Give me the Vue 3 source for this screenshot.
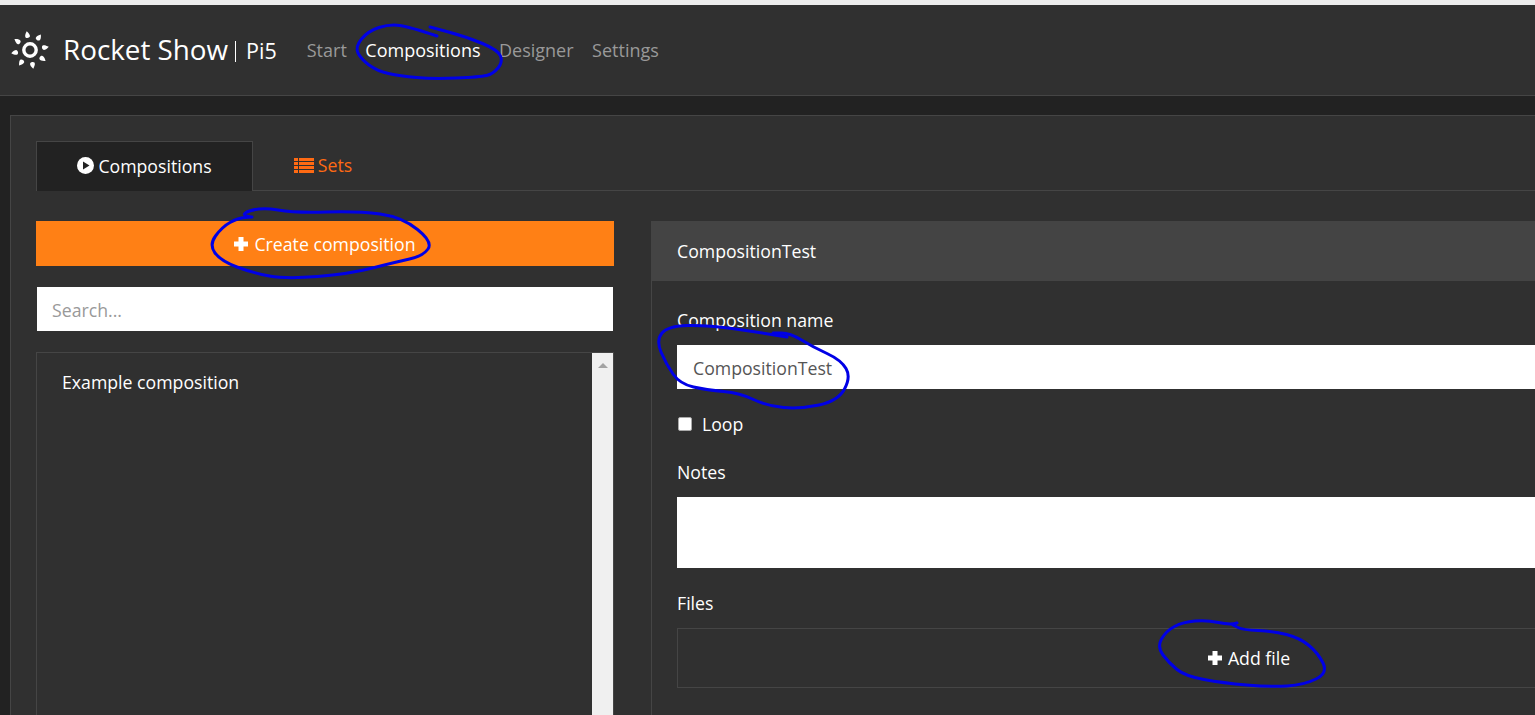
<script setup>
const navLinks = [
  { label: 'Start' },
  { label: 'Compositions', active: true },
  { label: 'Designer' },
  { label: 'Settings' }
]

const rays = [-10, 35, 80, 125, 170, 215, 260, 305]

// pen scribbles on top of the screenshot, smoothed through midpoints
const scribbles = [
  [[437,36],[410,27],[390,24],[368,31],[355,47],[361,59],[377,71],[400,76],[433,79],[480,77],[493,74],[503,62],[498,50],[467,37],[430,27]],
  [[252,217],[238,215],[261,207],[295,213],[358,211],[402,217],[433,242],[423,256],[396,262],[349,274],[286,279],[253,273],[221,261],[209,245],[222,227],[238,218],[252,217]],
  [[787,337],[757,332],[707,325],[668,326],[656,340],[666,364],[680,384],[707,390],[740,393],[767,406],[800,409],[838,401],[851,377],[841,360],[813,347],[790,333],[773,333]],
  [[1237,623],[1230,625],[1207,620],[1183,622],[1166,631],[1157,647],[1169,663],[1185,676],[1223,683],[1270,687],[1304,685],[1328,673],[1318,653],[1300,638],[1273,631],[1243,630],[1233,625]]
]

function smooth(pts) {
  let d = `M${pts[0][0]} ${pts[0][1]}`
  for (let i = 1; i < pts.length - 1; i++) {
    const mx = (pts[i][0] + pts[i + 1][0]) / 2
    const my = (pts[i][1] + pts[i + 1][1]) / 2
    d += ` Q${pts[i][0]} ${pts[i][1]} ${mx} ${my}`
  }
  const last = pts[pts.length - 1]
  return d + ` L${last[0]} ${last[1]}`
}
</script>

<template>
  <div class="page">
    <header class="navbar">
      <svg class="logo" viewBox="0 0 40 40" width="40" height="40">
        <circle cx="20" cy="20" r="6.2" fill="none" stroke="#fff" stroke-width="3.4" />
        <path
          v-for="r in rays"
          :key="r"
          d="M20 1 C22 3.5 22.8 5.5 22.2 6.8 C21.4 8.2 18.6 8.2 17.8 6.8 C17.2 5.5 18 3.5 20 1Z"
          fill="#fff"
          :transform="`rotate(${r} 20 20)`"
        />
      </svg>
      <span class="brand">Rocket Show</span>
      <span class="brand-sep"></span>
      <span class="device">Pi5</span>
      <nav class="nav">
        <a v-for="l in navLinks" :key="l.label" :class="{ active: l.active }">{{ l.label }}</a>
      </nav>
    </header>

    <main class="main">
      <section class="panel">
        <div class="tabs">
          <div class="tab active">
            <svg width="17" height="17" viewBox="0 0 17 17">
              <circle cx="8.5" cy="8.5" r="8.5" fill="#fff" />
              <path d="M6 4.5 L12.5 8.5 L6 12.5Z" fill="#222" />
            </svg>
            Compositions
          </div>
          <div class="tab">
            <svg width="20" height="15" viewBox="0 0 20 15" fill="#ff6a13">
              <path d="M0 0h4v3H0zM5 0h15v3H5zM0 4h4v3H0zM5 4h15v3H5zM0 8h4v3H0zM5 8h15v3H5zM0 12h4v3H0zM5 12h15v3H5z" />
            </svg>
            Sets
          </div>
        </div>

        <div class="columns">
          <div class="left">
            <button class="btn-create">
              <svg class="plus" width="14" height="14" viewBox="0 0 14 14"><path d="M4.5 0h5v4.5H14v5H9.5V14h-5V9.5H0v-5h4.5z" fill="#fff" /></svg>
              Create composition
            </button>
            <input class="search" type="text" placeholder="Search..." />
            <div class="list">
              <div class="list-items">
                <div class="list-item">Example composition</div>
              </div>
              <div class="scrollbar"><span class="arrow"></span></div>
            </div>
          </div>

          <div class="detail">
            <div class="detail-head">CompositionTest</div>
            <div class="detail-body">
              <label class="lbl">Composition name</label>
              <input class="field" type="text" value="CompositionTest" />
              <label class="loop"><span class="check"></span>Loop</label>
              <label class="lbl notes-lbl">Notes</label>
              <div class="notes"></div>
              <label class="lbl files-lbl">Files</label>
              <div class="files">
                <svg class="plus" width="14" height="14" viewBox="0 0 14 14"><path d="M4.5 0h5v4.5H14v5H9.5V14h-5V9.5H0v-5h4.5z" fill="#fff" /></svg>
                Add file
              </div>
            </div>
          </div>
        </div>
      </section>
    </main>

    <svg class="ink" width="1535" height="715" viewBox="0 0 1535 715">
      <path v-for="(s, i) in scribbles" :key="i" :d="smooth(s)" />
    </svg>
  </div>
</template>

<style>
html, body { margin: 0; background: #222; }
</style>

<style scoped>
.page {
  position: relative;
  width: 1535px;
  height: 715px;
  overflow: hidden;
  background: #222;
  color: #fff;
  font-family: "Open Sans", "Noto Sans", sans-serif;
  font-size: 17.7px;
  border-top: 5px solid #ececec;
  box-sizing: border-box;
}

.navbar {
  height: 91px;
  box-sizing: border-box;
  background: #303030;
  border-bottom: 1px solid #454545;
  display: flex;
  align-items: center;
  padding-left: 10px;
}
.logo { margin-right: 13px; }
.brand { font-size: 27.8px; padding-bottom: 2px; }
.brand-sep { width: 1px; height: 21px; background: #fff; margin: 3px 10px 0 7px; }
.device { font-size: 21.5px; margin-right: 30px; }
.nav { display: flex; gap: 18.5px; font-size: 18px; }
.nav a { color: #999; }
.nav a.active { color: #fff; }

.main { padding: 19px 0 0 10px; }
.panel {
  width: 1900px;
  height: 700px;
  box-sizing: border-box;
  background: #303030;
  border: 1px solid #454545;
  padding: 25px;
}

.tabs {
  display: flex;
  height: 50px;
  box-sizing: border-box;
  border-bottom: 1px solid #454545;
}
.tab {
  width: 140px;
  height: 50px;
  padding-bottom: 2px;
  box-sizing: border-box;
  display: flex;
  align-items: center;
  justify-content: center;
  gap: 4px;
  color: #ff6a13;
}
.tab.active {
  width: 217px;
  background: #222;
  color: #fff;
  border: 1px solid #454545;
  border-bottom: 0;
}

.columns {
  display: flex;
  gap: 37px;
  margin-top: 30px;
}
.left { width: 578px; flex: none; }
.btn-create {
  width: 100%;
  height: 45px;
  border: 0;
  background: #ff8015;
  color: #fff;
  font: inherit;
  display: flex;
  align-items: center;
  justify-content: center;
  gap: 6px;
}
.search {
  display: block;
  width: 576px;
  height: 44px;
  margin: 21px 1px;
  box-sizing: border-box;
  border: 0;
  outline: 0;
  background: #fff;
  padding: 2px 15px 0;
  font: inherit;
  color: #555;
}
.search::placeholder { color: #999; opacity: 1; }
.list {
  display: flex;
  height: 400px;
  border: 1px solid #454545;
  box-sizing: border-box;
}
.list-items { flex: 1; padding: 17px 25px; }
.list-item { line-height: 24px; }
.scrollbar {
  width: 21px;
  background: #f0f0f0;
  display: flex;
  justify-content: center;
  padding-top: 10px;
  box-sizing: border-box;
}
.arrow {
  width: 0;
  height: 0;
  border-left: 5px solid transparent;
  border-right: 5px solid transparent;
  border-bottom: 5px solid #a3a3a3;
}

.detail {
  width: 1196px;
  flex: none;
  border: 1px solid #454545;
  border-top: 0;
  box-sizing: border-box;
  height: 600px;
}
.detail-head {
  height: 60px;
  margin: 0 -1px;
  background: #444;
  display: flex;
  align-items: center;
  padding-left: 26px;
}
.detail-body { padding: 27px 25px; }
.lbl { display: block; line-height: 24px; }
.field {
  display: block;
  width: 100%;
  height: 44px;
  margin-top: 13px;
  box-sizing: border-box;
  border: 0;
  outline: 0;
  background: #fff;
  padding: 2px 16px 0;
  font: inherit;
  color: #555;
}
.loop {
  display: flex;
  align-items: center;
  gap: 10px;
  margin-top: 23px;
  line-height: 24px;
}
.check {
  width: 14px;
  height: 14px;
  box-sizing: border-box;
  background: #fff;
  border: 1px solid #aaa;
  border-radius: 2px;
  margin-left: 1px;
}
.notes-lbl { margin-top: 24px; }
.notes { height: 71px; margin-top: 13px; background: #fff; }
.files-lbl { margin-top: 23px; }
.files {
  height: 60px;
  margin-top: 13px;
  box-sizing: border-box;
  border: 1px solid #454545;
  display: flex;
  align-items: center;
  justify-content: center;
  gap: 6px;
}

.ink {
  position: absolute;
  left: 0;
  top: -5px;
  pointer-events: none;
}
.ink path {
  fill: none;
  stroke: #0000e6;
  stroke-width: 3;
  stroke-linecap: round;
  stroke-linejoin: round;
}
</style>
